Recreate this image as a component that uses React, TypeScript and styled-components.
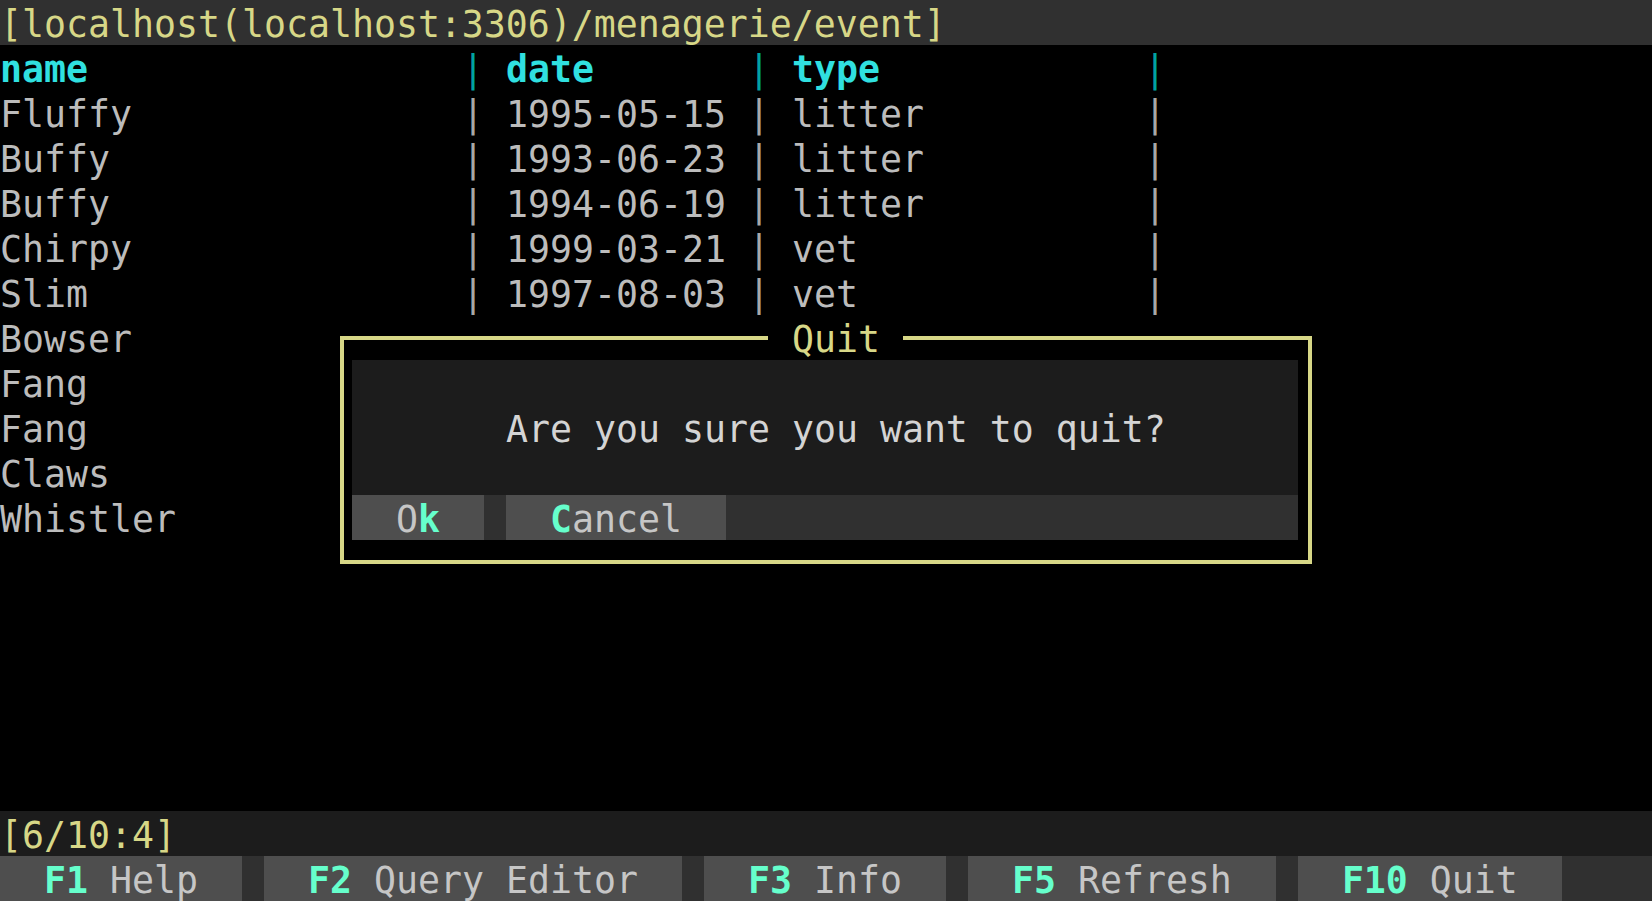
import styled, { createGlobalStyle } from 'styled-components'

const CW = 22
const RH = 45

const ROWS = [
  { name: 'Fluffy', date: '1995-05-15', type: 'litter' },
  { name: 'Buffy', date: '1993-06-23', type: 'litter' },
  { name: 'Buffy', date: '1994-06-19', type: 'litter' },
  { name: 'Chirpy', date: '1999-03-21', type: 'vet' },
  { name: 'Slim', date: '1997-08-03', type: 'vet' },
  { name: 'Bowser' },
  { name: 'Fang' },
  { name: 'Fang' },
  { name: 'Claws' },
  { name: 'Whistler' },
]

const FKEYS = [
  { key: 'F1', label: 'Help' },
  { key: 'F2', label: 'Query Editor' },
  { key: 'F3', label: 'Info' },
  { key: 'F5', label: 'Refresh' },
  { key: 'F10', label: 'Quit' },
]

const GlobalStyle = createGlobalStyle`
  html, body {
    margin: 0;
    padding: 0;
    background: #000;
  }
  body {
    font-family: "DejaVu Sans Mono", "Liberation Mono", monospace;
    font-size: 36.54px;
  }
`

const Screen = styled.div`
  position: relative;
  width: 1652px;
  height: 901px;
  display: flex;
  flex-direction: column;
  background: #000;
  color: #bcbcbc;
  overflow: hidden;
`

const Line = styled.div<{ $bg?: string; $fg?: string }>`
  display: flex;
  flex: none;
  height: ${RH}px;
  box-sizing: border-box;
  padding-top: 4px;
  line-height: 41px;
  white-space: pre;
  background: ${p => p.$bg || 'transparent'};
  color: ${p => p.$fg || 'inherit'};
`

const Cell = styled.span<{ $w: number; $head?: boolean }>`
  flex: none;
  width: ${p => p.$w * CW}px;
  overflow: hidden;
  font-weight: ${p => (p.$head ? 700 : 400)};
  color: ${p => (p.$head ? '#30e0e0' : 'inherit')};
`

const Pipe = styled.span<{ $w: number; $head?: boolean }>`
  flex: none;
  width: ${p => p.$w * CW}px;
  color: ${p => (p.$head ? '#00a3a3' : '#a8a8a8')};
`

const Spacer = styled.div`
  flex: 1;
`

const TabBar = styled(Line)`
  padding-top: 0;
  gap: ${CW}px;
`

const Tab = styled.span`
  flex: none;
  box-sizing: border-box;
  height: ${RH}px;
  padding: 4px ${CW * 2}px 0;
  background: #4e4e4e;
  color: #c6c6c6;
`

const Hot = styled.span`
  font-weight: 700;
  color: #66ffcc;
`

const Dialog = styled.div`
  position: absolute;
  left: ${CW * 15}px;
  top: ${RH * 7}px;
  width: ${CW * 45}px;
  height: ${RH * 6}px;
  box-sizing: border-box;
  padding: ${RH}px ${CW}px;
  background: #000;

  &::before {
    content: '';
    position: absolute;
    top: 21px;
    left: 10px;
    right: 8px;
    bottom: 21px;
    border: 4px solid #d7d787;
  }
`

const DialogTitle = styled.div`
  position: absolute;
  top: 0;
  left: 438px;
  width: 135px;
  height: ${RH}px;
  box-sizing: border-box;
  padding: 4px 0 0 24px;
  line-height: 41px;
  background: #000;
  color: #d7d787;
`

const DialogBody = styled.div`
  position: relative;
  height: ${RH * 3}px;
  box-sizing: border-box;
  padding-top: ${RH}px;
  background: #1c1c1c;
`

const Message = styled(Line)`
  padding-left: ${CW * 7}px;
  color: #d4d4d4;
`

const ButtonRow = styled(TabBar)`
  position: relative;
`

export default function App() {
  return (
    <Screen>
      <GlobalStyle />
      <Line $bg="#303030" $fg="#d7d787">
        [localhost(localhost:3306)/menagerie/event]
      </Line>
      <Line>
        <Cell $w={21} $head>name</Cell>
        <Pipe $w={2} $head>|</Pipe>
        <Cell $w={11} $head>date</Cell>
        <Pipe $w={2} $head>|</Pipe>
        <Cell $w={16} $head>type</Cell>
        <Pipe $w={1} $head>|</Pipe>
      </Line>
      {ROWS.map((r, i) => (
        <Line key={i}>
          <Cell $w={21}>{r.name}</Cell>
          {r.date && (
            <>
              <Pipe $w={2}>|</Pipe>
              <Cell $w={11}>{r.date}</Cell>
              <Pipe $w={2}>|</Pipe>
              <Cell $w={16}>{r.type}</Cell>
              <Pipe $w={1}>|</Pipe>
            </>
          )}
        </Line>
      ))}
      <Spacer />
      <Line $bg="#1c1c1c" $fg="#d7d787">[6/10:4]</Line>
      <TabBar $bg="#303030">
        {FKEYS.map(f => (
          <Tab key={f.key}>
            <Hot>{f.key}</Hot> {f.label}
          </Tab>
        ))}
      </TabBar>

      <Dialog>
        <DialogTitle> Quit </DialogTitle>
        <DialogBody>
          <Message>Are you sure you want to quit?</Message>
        </DialogBody>
        <ButtonRow $bg="#303030">
          <Tab>
            O<Hot>k</Hot>
          </Tab>
          <Tab>
            <Hot>C</Hot>ancel
          </Tab>
        </ButtonRow>
      </Dialog>
    </Screen>
  )
}
